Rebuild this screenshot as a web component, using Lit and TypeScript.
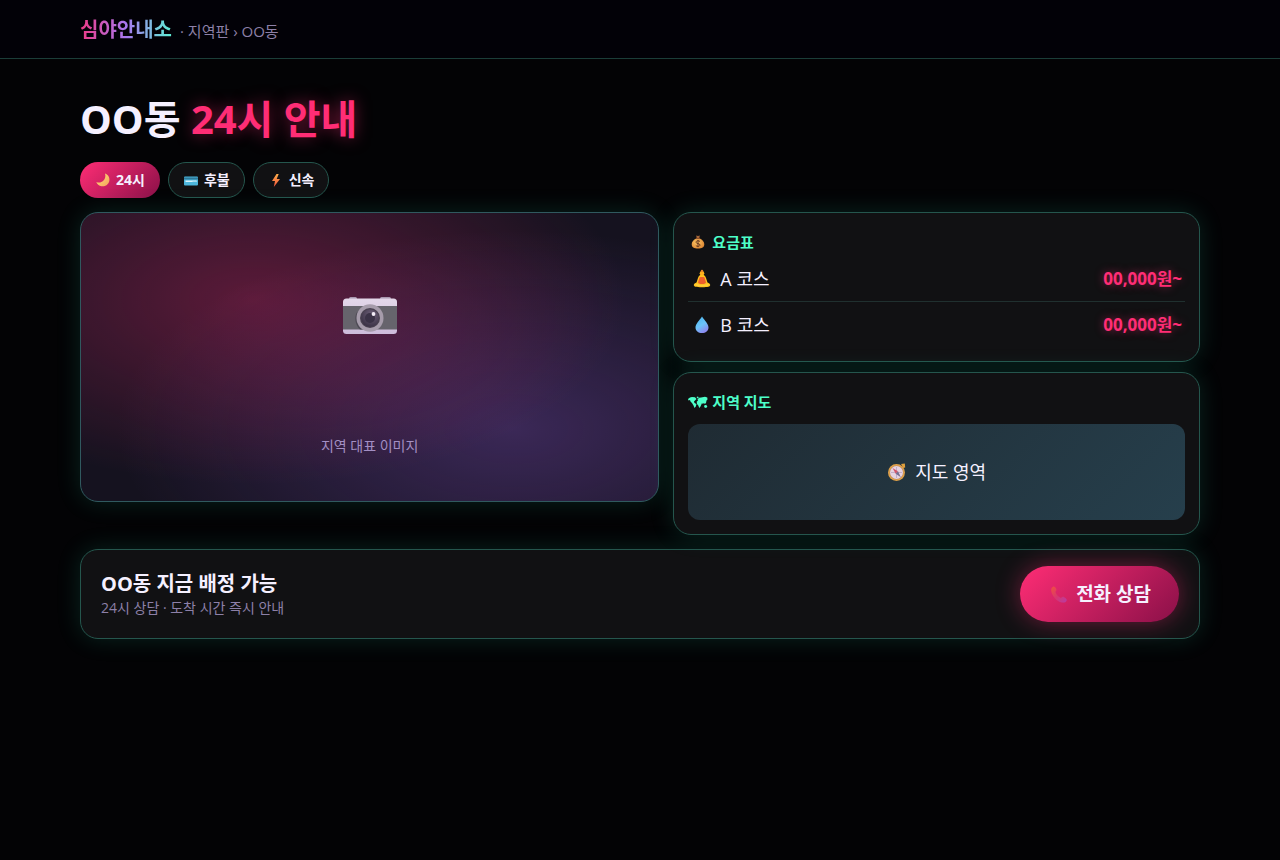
import { LitElement, html, css, svg } from "lit";
import { customElement } from "lit/decorators.js";

const moon = svg`<defs><linearGradient id="mg" x1="0" y1="0" x2="1" y2="1"><stop offset="0" stop-color="#ffe27a"/><stop offset="1" stop-color="#f5a35c"/></linearGradient></defs>
  <path d="M10 1.500c3.400 1.200 5 4.300 4.300 7.500-.8 3.700-4.300 5.800-7.800 5.200C4 13.800 2 12.200 1.300 10c2.400 1 5.200.6 7-1.200C10.300 6.900 10.900 4 10 1.500z" fill="url(#mg)"/>`;

const bankCard = svg`<path d="M2 4.500h12a1 1 0 0 1 1 1v7a1 1 0 0 1-1 1H2a1 1 0 0 1-1-1v-7a1 1 0 0 1 1-1z" fill="#4db6dc"/>
  <path d="M1 5.500h14v2H1z" fill="#2d7898"/><path d="M2.500 8.500h11v1.500h-11z" fill="#d9f2fb"/><path d="M9.500 8.500h4v1.500h-4z" fill="#a3d9ee"/>`;

const bolt = svg`<defs><linearGradient id="bg" x1="0" y1="0" x2="0" y2="1"><stop offset="0" stop-color="#ffb04a"/><stop offset="1" stop-color="#f0503c"/></linearGradient></defs>
  <path d="M8.500 2 4 9h3l-1.200 6L12 7H8.700l2-5z" fill="url(#bg)"/>`;

const moneyBag = svg`<defs><radialGradient id="mb" cx=".4" cy=".4" r=".7"><stop offset="0" stop-color="#ffc765"/><stop offset="1" stop-color="#d9812f"/></radialGradient></defs>
  <path d="M6.200 1.500 8 2l1.800-.5-.6 3H6.800z" fill="#a8673a"/>
  <path d="M6.300 4.500h3.400c2.800 1.200 4.600 3.300 4.600 5.700 0 2.900-2.200 4.300-6.300 4.300s-6.300-1.400-6.300-4.300c0-2.400 1.800-4.500 4.600-5.700z" fill="url(#mb)"/>
  <path d="M5.900 3.900h4.200v1.200H5.900z" fill="#8e4f2a"/>
  <path d="M10 7.600C9.500 7 8.800 6.800 8 6.800c-1.200 0-2 .6-2 1.400 0 2 4 .8 4 2.800 0 .9-.9 1.400-2 1.400-.9 0-1.700-.3-2.200-1M8 6v7.200" fill="none" stroke="#6b3a20" stroke-width="1"/>`;

const lotus = svg`<path d="M10 5.500c2 0 3.300 1.200 4 3.500l1.500 4.500c1.400.5 2.700 1.300 2.700 2.500 0 1.600-2 2.200-8.200 2.200S1.800 17.600 1.800 16c0-1.200 1.300-2 2.700-2.500L6 9c.7-2.300 2-3.500 4-3.500z" fill="#ffc21f"/>
  <path d="M7.500 8.500c1-.6 4-.6 5 0l1.500 5c-1 2-7 2-8 0z" fill="#ee5f2b"/>
  <path d="M2.500 15.500c2.500-1 5 .3 7.500.6 2.500-.3 5-1.600 7.500-.6-.8 2.500-14.200 2.500-15 0z" fill="#ffcf3b"/>
  <circle cx="10" cy="4.300" r="2.300" fill="#ffb21c"/><circle cx="10" cy="2" r="1.200" fill="#e9862b"/>`;

const drop = svg`<defs><linearGradient id="dg" x1="0" y1="0" x2=".5" y2="1"><stop offset="0" stop-color="#46b4ec"/><stop offset=".6" stop-color="#6cc4fa"/><stop offset="1" stop-color="#8b8cf0"/></linearGradient></defs>
  <path d="M10 1.500c2.500 3.800 6.500 7.300 6.500 11 0 3.500-2.800 5.500-6.500 5.500s-6.500-2-6.500-5.500c0-3.700 4-7.200 6.500-11z" fill="url(#dg)"/>`;

const world = svg`<path d="M0 4 2 2.500 4 2l3 .3L8.500 4 7 5.500 6 6.500l.5 1.500L8.500 9l-.7 2.500L6.500 13l-1-2.500L4 8 2.500 6.500 2 5 .5 5.500zM8.500 2l1.500-.5.800 1L9.500 3.500zM9.500 4.500l1.500-1.800 2-.2 4-.8 2.300.8.2 2-1 1L18 8l-1.200 1-.8-1-1.200 1L14 8l-.6 1.500-.9 2-1.200 1.500-1-2.500L9 9l-.3-2.300L10 5.500zM16.200 10.500l2-.7 1.200 1.900-1.400 1.300-1.800-.7z" fill="currentColor"/>`;

const compass = svg`<path d="m14 2 3.800-.5.400 4-2 .5z" fill="#e0a03c"/><circle cx="9.500" cy="10.500" r="8.500" fill="#e0a24a"/>
  <circle cx="9.500" cy="10.500" r="6.900" fill="#b98a62"/><circle cx="9.500" cy="10.500" r="6.500" fill="#e6d3e2"/>
  <path d="M9.500 5v11M4 10.500h11" stroke="#b7a5c4" stroke-width=".8"/>
  <path d="m5.500 6 5.500 3.300-2.300 2.400z" fill="#d4566b"/><path d="m13.800 15.200-2.800-5.900-2.300 2.400z" fill="#776f92"/>`;

const camera = svg`<defs><linearGradient id="cb" x1="0" y1="0" x2="0" y2="1"><stop offset="0" stop-color="#e3d7e9"/><stop offset="1" stop-color="#cdbcdb"/></linearGradient>
    <radialGradient id="cl" cx=".6" cy=".3" r=".8"><stop offset="0" stop-color="#6d6078"/><stop offset="1" stop-color="#352d40"/></radialGradient></defs>
  <rect x="6" y="0" width="8" height="4" rx="1.500" fill="#a998b0"/><rect x="37" y="0" width="11" height="4" rx="1.500" fill="#a998b0"/>
  <rect x="0" y="1.500" width="54" height="35.500" rx="3.500" fill="url(#cb)"/><path d="M0 9h54v23.500H0z" fill="#66646c"/>
  <path d="M14 15c-3 5-2 13 3 17.500h10V15z" fill="#4e4b55"/>
  <ellipse cx="27" cy="21" rx="13.500" ry="13.700" fill="#a69cab"/><circle cx="27" cy="21" r="10" fill="#494150"/>
  <circle cx="27" cy="21" r="8.800" fill="url(#cl)"/><circle cx="27" cy="21" r="5" fill="#3a3246"/><circle cx="30.500" cy="17" r="1.900" fill="#f2ecf6"/>`;

const phone = svg`<defs><linearGradient id="pg" x1="0" y1="0" x2="1" y2="1"><stop offset="0" stop-color="#f0503f"/><stop offset=".5" stop-color="#d8366f"/><stop offset="1" stop-color="#b63ba4"/></linearGradient></defs>
  <path d="M3 1.800c1.300-.7 2.600.6 3.300 2.300.5 1.300 0 2-1 2.700.9 2.800 3 5 5.700 6.200.9-1.200 1.900-1.500 3.200-.8 1.800 1 3 2.200 2.400 3.500-.7 1.500-2.600 2.200-4.600 1.800C6.500 16.500 2 11 1.300 6 1 4 1.600 2.500 3 1.800z" fill="url(#pg)"/>`;

const tags = [
  { label: "24시", glyph: moon, hot: true },
  { label: "후불", glyph: bankCard, hot: false },
  { label: "신속", glyph: bolt, hot: false },
];

const courses = [
  { name: "A 코스", price: "00,000원~", glyph: lotus },
  { name: "B 코스", price: "00,000원~", glyph: drop },
];

@customElement("app-root")
export class AppRoot extends LitElement {
  static styles = css`
    :host {
      --line: #25564d;
      --mint: #4dffc9;
      --pink: #ff2d75;
      --text: #f5f0ff;
      --muted: #8d80a8;
      display: block;
      min-height: 100vh;
      background: #030305;
      color: var(--text);
      font-family: "Open Sans", "Noto Sans CJK KR", sans-serif;
      font-size: 18px;
      line-height: 24px;
    }
    * { box-sizing: border-box; }
    h1, h2, p, ul { margin: 0; padding: 0; }
    svg { display: block; flex: none; }
    .wrap { max-width: 1160px; margin: 0 auto; padding: 0 20px; }
    .top { background: #020107; border-bottom: 1px solid #1b3d38; }
    .bar { display: flex; align-items: baseline; gap: 8px; padding-top: 17px; padding-bottom: 14px; line-height: 26px; }
    .logo {
      font-size: 20px;
      font-weight: 700;
      text-decoration: none;
      color: transparent;
      background: linear-gradient(90deg, #ee3a86, #a878f0 50%, #5cf0d4);
      -webkit-background-clip: text;
      background-clip: text;
    }
    .crumb { font-size: 15px; color: var(--muted); }
    .title { padding-top: 32px; font-size: 40px; line-height: 56px; font-weight: 700; }
    .hot { color: var(--pink); text-shadow: 0 0 16px rgba(255, 45, 117, 0.5); }
    .tags { display: flex; flex-wrap: wrap; gap: 8px; margin: 15px 0 14px; list-style: none; }
    .tag {
      display: flex;
      align-items: center;
      gap: 5px;
      height: 36px;
      padding: 0 14px;
      border: 1px solid var(--line);
      border-radius: 18px;
      background: #111113;
      font-size: 14px;
      font-weight: 700;
    }
    .tag-hot { border-color: transparent; background: linear-gradient(135deg, #ff2d75, #8a1048) border-box; }
    .grid { display: grid; grid-template-columns: 1.1fr 1fr; gap: 14px; align-items: start; }
    .panel {
      border: 1px solid var(--line);
      border-radius: 18px;
      background: #111113;
      box-shadow: 0 0 24px rgba(45, 230, 180, 0.15);
    }
    .hero {
      display: flex;
      flex-direction: column;
      align-items: center;
      justify-content: flex-end;
      gap: 100px;
      height: 290px;
      padding-bottom: 43px;
      border-color: #30595f;
      background:
        radial-gradient(ellipse at 30% 30%, rgba(255, 45, 117, 0.3), transparent 65%),
        radial-gradient(ellipse at 75% 75%, rgba(146, 90, 215, 0.3), transparent 65%),
        #15121f;
    }
    .caption { font-size: 14px; line-height: 24px; color: #a38fc4; }
    .side { display: grid; gap: 10px; }
    .card { padding: 14px; }
    .card-title { display: flex; align-items: center; gap: 4px; height: 29px; font-size: 15px; font-weight: 700; color: var(--mint); }
    .bag { margin: 0 2px; }
    .rows { list-style: none; }
    .row { display: flex; align-items: center; justify-content: space-between; height: 45px; padding: 0 3px 0 4px; }
    .row + .row { box-shadow: 0 -1px #20302f; margin-top: 1px; }
    .name { display: flex; align-items: center; gap: 8px; }
    .price { font-weight: 700; font-size: 17px; color: var(--pink); text-shadow: 0 0 8px rgba(255, 45, 117, 0.5); }
    .map {
      display: flex;
      align-items: center;
      justify-content: center;
      gap: 8px;
      height: 96px;
      margin-top: 8px;
      border-radius: 12px;
      background: linear-gradient(135deg, #1f2b33, #263f4c);
    }
    .cta { display: flex; align-items: center; justify-content: space-between; margin-top: 14px; padding: 16px 20px; }
    .lead { font-size: 20px; line-height: 28px; font-weight: 700; }
    .note { font-size: 14px; line-height: 20px; color: var(--muted); }
    .call {
      display: flex;
      align-items: center;
      gap: 8px;
      height: 56px;
      padding: 0 28px 0 30px;
      border: 0;
      border-radius: 28px;
      background: linear-gradient(135deg, #ff2d75, #8a1048);
      box-shadow: 0 0 24px rgba(255, 45, 117, 0.4);
      color: var(--text);
      font: inherit;
      font-size: 19px;
      font-weight: 700;
      cursor: pointer;
    }
  `;

  render() {
    return html`
      <header class="top">
        <div class="wrap bar">
          <a class="logo" href="#">심야안내소</a>
          <span class="crumb">· 지역판 › OO동</span>
        </div>
      </header>
      <main class="wrap">
        <h1 class="title">OO동 <span class="hot">24시 안내</span></h1>
        <ul class="tags">
          ${tags.map((t) => html`<li class="tag ${t.hot ? "tag-hot" : ""}">
            <svg width="16" height="16" viewBox="0 0 16 16" aria-hidden="true">${t.glyph}</svg>${t.label}
          </li>`)}
        </ul>
        <div class="grid">
          <section class="panel hero">
            <svg width="54" height="37" viewBox="0 0 54 37" aria-hidden="true">${camera}</svg>
            <p class="caption">지역 대표 이미지</p>
          </section>
          <div class="side">
            <section class="panel card">
              <h2 class="card-title">
                <svg class="bag" width="16" height="16" viewBox="0 0 16 16" aria-hidden="true">${moneyBag}</svg>요금표
              </h2>
              <ul class="rows">
                ${courses.map((c) => html`<li class="row">
                  <span class="name"><svg width="20" height="20" viewBox="0 0 20 20" aria-hidden="true">${c.glyph}</svg>${c.name}</span>
                  <span class="price">${c.price}</span>
                </li>`)}
              </ul>
            </section>
            <section class="panel card">
              <h2 class="card-title">
                <svg width="20" height="14" viewBox="0 0 20 14" aria-hidden="true">${world}</svg>지역 지도
              </h2>
              <div class="map">
                <svg width="20" height="20" viewBox="0 0 20 20" aria-hidden="true">${compass}</svg>지도 영역
              </div>
            </section>
          </div>
        </div>
        <section class="panel cta">
          <div>
            <p class="lead">OO동 지금 배정 가능</p>
            <p class="note">24시 상담 · 도착 시간 즉시 안내</p>
          </div>
          <button class="call" type="button">
            <svg width="18" height="18" viewBox="0 0 18 18" aria-hidden="true">${phone}</svg>전화 상담
          </button>
        </section>
      </main>
    `;
  }
}
